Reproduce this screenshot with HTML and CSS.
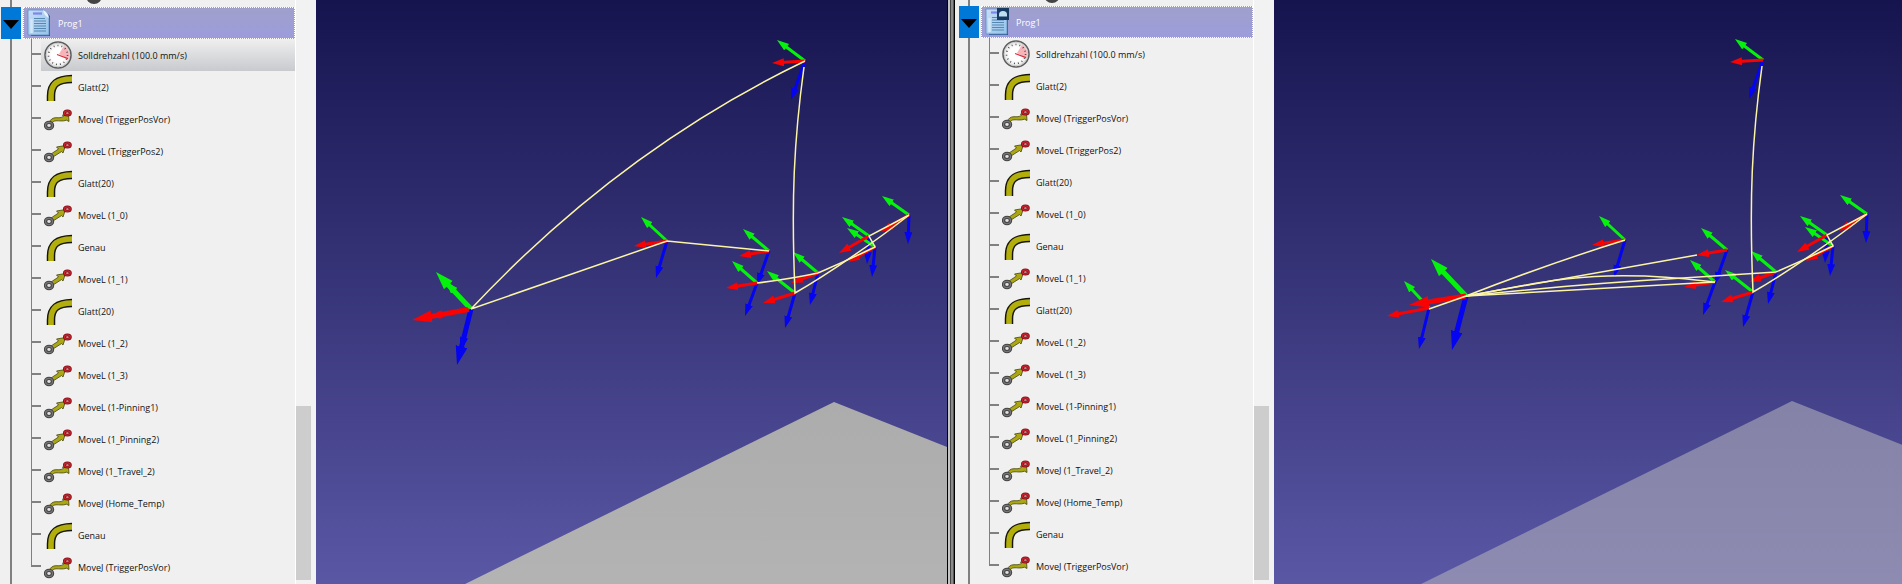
FILE: index.html
```
<!DOCTYPE html>
<html lang="de">
<head>
<meta charset="utf-8">
<title>Prog1</title>
<link rel="stylesheet" href="styles.css">
</head>
<body>
<svg class="defs" width="0" height="0" aria-hidden="true">
  <defs>
    <marker id="tip-r" markerUnits="userSpaceOnUse" markerWidth="14" markerHeight="10" refX="12" refY="4" orient="auto"><path d="M0 0 L12 4 L0 8Z" fill="#f80303"/></marker>
    <marker id="tip-g" markerUnits="userSpaceOnUse" markerWidth="14" markerHeight="10" refX="12" refY="4" orient="auto"><path d="M0 0 L12 4 L0 8Z" fill="#04f20c"/></marker>
    <marker id="tip-b" markerUnits="userSpaceOnUse" markerWidth="14" markerHeight="10" refX="12" refY="4" orient="auto"><path d="M0 0 L12 4 L0 8Z" fill="#0404f0"/></marker>
    <marker id="big-r" markerUnits="userSpaceOnUse" markerWidth="20" markerHeight="14" refX="20" refY="6" orient="auto"><path d="M0 0 L20 6 L0 12Z" fill="#f80303"/></marker>
    <marker id="big-g" markerUnits="userSpaceOnUse" markerWidth="20" markerHeight="14" refX="18" refY="6" orient="auto"><path d="M0 0 L18 6 L0 12Z" fill="#04f20c"/></marker>
    <marker id="big-b" markerUnits="userSpaceOnUse" markerWidth="20" markerHeight="14" refX="19" refY="6" orient="auto"><path d="M0 0 L19 6 L0 12Z" fill="#0404f0"/></marker>
    <linearGradient id="floor-solid" x1="0" y1="0" x2="0" y2="1"><stop offset="0" stop-color="#acacac"/><stop offset="1" stop-color="#b8b8b8"/></linearGradient>
    <linearGradient id="floor-clear" x1="0" y1="0" x2="0" y2="1"><stop offset="0" stop-color="#8482a6"/><stop offset="1" stop-color="#9391b8"/></linearGradient>
    <radialGradient id="dial"><stop offset="0.5" stop-color="#fff"/><stop offset="1" stop-color="#e4e4e4"/></radialGradient>
    <linearGradient id="paper" x1="0" y1="0" x2="1" y2="1"><stop offset="0" stop-color="#c9dcf8"/><stop offset="1" stop-color="#93c4e8"/></linearGradient>

    <g id="frames">
      <g class="axis axis-b">
        <path pathLength="100" d="M805 61 L791 100"/><path pathLength="100" d="M909 215 L908 244"/>
        <path pathLength="100" d="M869 236 L867 264"/><path pathLength="100" d="M875 247 L872 277"/>
        <path pathLength="100" d="M818 273 L810 305"/><path pathLength="100" d="M795 293 L785 328"/>
        <path pathLength="100" d="M769 251 L757 285"/><path pathLength="100" d="M757 283 L745 316"/>
        <path pathLength="100" d="M667 241 L656 278"/><path pathLength="100" d="M471 309 L461 350"/>
      </g>
      <g class="axis axis-g">
        <path pathLength="100" d="M805 61 L777 40"/><path pathLength="100" d="M909 215 L882 196"/>
        <path pathLength="100" d="M869 236 L842 217"/><path pathLength="100" d="M875 247 L847 228"/>
        <path pathLength="100" d="M818 273 L793 252"/><path pathLength="100" d="M795 293 L767 271"/>
        <path pathLength="100" d="M769 251 L743 229"/><path pathLength="100" d="M757 283 L732 261"/>
        <path pathLength="100" d="M667 241 L641 217"/><path pathLength="100" d="M471 309 L446 282"/>
      </g>
      <g class="axis axis-r">
        <path pathLength="100" d="M805 61 L772 63"/><path pathLength="100" d="M909 215 L881 232"/>
        <path pathLength="100" d="M869 236 L839 253"/><path pathLength="100" d="M875 247 L848 262"/>
        <path pathLength="100" d="M818 273 L791 283"/><path pathLength="100" d="M795 293 L763 303"/>
        <path pathLength="100" d="M769 251 L739 256"/><path pathLength="100" d="M757 283 L726 288"/>
        <path pathLength="100" d="M667 241 L634 246"/><path pathLength="100" d="M471 309 L429 317"/>
      </g>
    </g>
    <g id="shared-track" class="track">
      <path d="M804 67 C794 140 791 200 795 293 C830 273 880 238 909 215"/>
      <path d="M818 273 Q846 261 875 247 L869 236 L909 215"/>
    </g>

    <symbol id="i-speed" viewBox="0 0 28 28">
      <circle cx="14" cy="14" r="13" fill="url(#dial)" stroke="#5e5e5e" stroke-width="1.6"/>
      <circle cx="14" cy="14" r="11.8" fill="none" stroke="#c4c4c4" stroke-width="0.8"/>
      <path d="M15 13 L20 4.800 A11 11 0 0 1 24.500 18Z" fill="#f6b4b8"/>
      <circle cx="14" cy="14" r="9.500" fill="none" stroke="#444" stroke-width="1.600" stroke-dasharray="0.900 3.100"/>
      <path d="M13 13.500 L24 17.600" stroke="#d83040" stroke-width="1.200"/>
    </symbol>
    <symbol id="i-blend" viewBox="0 0 28 28">
      <path d="M7 28.500 V23 C7 11 13 6 28.500 6" fill="none" stroke="#16160a" stroke-width="8.500"/>
      <path d="M7 28.500 V23 C7 11 13 6 28.500 6" fill="none" stroke="#b2ae0c" stroke-width="5.600"/>
    </symbol>
    <symbol id="i-ends" viewBox="0 0 28 28">
      <ellipse cx="5" cy="20.500" rx="3.500" ry="3.100" fill="#e2e2e2" stroke="#444" stroke-width="3.400"/>
      <ellipse cx="5" cy="20.500" rx="3.500" ry="3.100" fill="none" stroke="#777" stroke-width="1.200"/>
      <ellipse cx="23.400" cy="8" rx="2.900" ry="2.100" fill="#fff" stroke="#7d0d14" stroke-width="3"/>
      <ellipse cx="23.400" cy="8" rx="2.900" ry="2.100" fill="none" stroke="#cc2530" stroke-width="1.200"/>
    </symbol>
    <symbol id="i-movej" viewBox="0 0 28 28">
      <path d="M5 18 C6 14.500 9 12.600 12 12.700 C15 12.800 17 13 19.500 11.400 L18.500 10 L24.500 9.500 L25 16.500 L22.500 15.200 C19 16.600 15 15.600 12 15.800 C10 16 8.500 16.800 8 18.500Z" fill="#aaa615" stroke="#45440d" stroke-width="0.800"/>
      <use href="#i-ends"/>
    </symbol>
    <symbol id="i-movel" viewBox="0 0 28 28">
      <path d="M7 17 L14.500 12 L12.500 10 L21.500 8.500 L19 16 L17.500 14.600 L9 20Z" fill="#aaa615" stroke="#45440d" stroke-width="0.800"/>
      <use href="#i-ends"/>
    </symbol>
    <symbol id="i-doc" viewBox="0 0 28 28">
      <path d="M5 2 H19 L24 7 V27 H5Z" fill="#32588a"/>
      <path d="M2 1 H17 Q22 3 23 9 V26 H2Z" fill="url(#paper)" stroke="#5b8ec4" stroke-width="0.800"/>
      <path d="M7 4.500 H16" stroke="#7b87ea" stroke-width="2.200"/>
      <path d="M17 1 Q18 7 23 9 Q22 3 17 1Z" fill="#e6f1fd"/>
      <path d="M5.500 10 V24" stroke="#d3e8f7" stroke-width="2.500"/>
      <path d="M8 9.500 H19 M8 12 H20 M8 14.500 H20 M8 17 H20 M8 19.500 H20 M8 22 H20" stroke="#5587b0" stroke-width="1"/>
    </symbol>
    <symbol id="i-doc-lock" viewBox="0 0 28 28">
      <use href="#i-doc"/>
      <rect x="13" y="0" width="12" height="12" fill="#173a63"/>
      <path d="M15 8.500 V6.500 Q15 3 19 3 Q23 3 23 6.500 V8.500Z" fill="#c0e0ef"/>
    </symbol>
  </defs>
</svg>

<main class="compare">
  <section class="pane">
    <div class="tree">
      <div class="previous"><span class="wheel"></span></div>
      <div class="program">
        <button class="toggle" aria-label="Prog1 einklappen"><svg viewBox="0 0 20 32"><path d="M2 13 H18 L10 22Z" fill="#000"/></svg></button>
        <div class="title"><svg class="icon"><use href="#i-doc"/></svg><span>Prog1</span></div>
      </div>
      <ul class="steps">
        <li><i class="branch"></i><div class="step selected"><svg class="icon"><use href="#i-speed"/></svg><span>Solldrehzahl (100.0 mm/s)</span></div></li>
        <li><i class="branch"></i><div class="step"><svg class="icon"><use href="#i-blend"/></svg><span>Glatt(2)</span></div></li>
        <li><i class="branch"></i><div class="step"><svg class="icon"><use href="#i-movej"/></svg><span>MoveJ (TriggerPosVor)</span></div></li>
        <li><i class="branch"></i><div class="step"><svg class="icon"><use href="#i-movel"/></svg><span>MoveL (TriggerPos2)</span></div></li>
        <li><i class="branch"></i><div class="step"><svg class="icon"><use href="#i-blend"/></svg><span>Glatt(20)</span></div></li>
        <li><i class="branch"></i><div class="step"><svg class="icon"><use href="#i-movel"/></svg><span>MoveL (1_0)</span></div></li>
        <li><i class="branch"></i><div class="step"><svg class="icon"><use href="#i-blend"/></svg><span>Genau</span></div></li>
        <li><i class="branch"></i><div class="step"><svg class="icon"><use href="#i-movel"/></svg><span>MoveL (1_1)</span></div></li>
        <li><i class="branch"></i><div class="step"><svg class="icon"><use href="#i-blend"/></svg><span>Glatt(20)</span></div></li>
        <li><i class="branch"></i><div class="step"><svg class="icon"><use href="#i-movel"/></svg><span>MoveL (1_2)</span></div></li>
        <li><i class="branch"></i><div class="step"><svg class="icon"><use href="#i-movel"/></svg><span>MoveL (1_3)</span></div></li>
        <li><i class="branch"></i><div class="step"><svg class="icon"><use href="#i-movel"/></svg><span>MoveL (1-Pinning1)</span></div></li>
        <li><i class="branch"></i><div class="step"><svg class="icon"><use href="#i-movel"/></svg><span>MoveL (1_Pinning2)</span></div></li>
        <li><i class="branch"></i><div class="step"><svg class="icon"><use href="#i-movej"/></svg><span>MoveJ (1_Travel_2)</span></div></li>
        <li><i class="branch"></i><div class="step"><svg class="icon"><use href="#i-movej"/></svg><span>MoveJ (Home_Temp)</span></div></li>
        <li><i class="branch"></i><div class="step"><svg class="icon"><use href="#i-blend"/></svg><span>Genau</span></div></li>
        <li><i class="branch"></i><div class="step"><svg class="icon"><use href="#i-movej"/></svg><span>MoveJ (TriggerPosVor)</span></div></li>
      </ul>
    </div>
    <div class="scrollbar"><div class="thumb"></div></div>
    <div class="scene">
      <svg viewBox="316 0 631 584" preserveAspectRatio="xMidYMid slice">
        <path d="M834 402 L1060 492 V700 H230Z" fill="url(#floor-solid)"/>
        <use href="#frames"/>
        <g class="axis axis-big">
          <path class="b" pathLength="100" d="M471 309 L457 365"/>
          <path class="g" pathLength="100" d="M471 309 L436 272"/>
          <path class="r" pathLength="100" d="M471 309 L412 320"/>
        </g>
        <g class="axis axis-r"><path pathLength="100" d="M471 309 L431 316"/></g>
        <g class="axis axis-g"><path pathLength="100" d="M471 309 L446 282"/></g>
        <g class="axis axis-b"><path pathLength="100" d="M471 309 L461 349"/></g>
        <use href="#shared-track"/>
        <g class="track">
          <path d="M805 61 Q620 150 471 309 L667 241 L769 251"/>
          <path d="M757 283 Q790 279 818 273"/>
        </g>
      </svg>
    </div>
  </section>

  <div class="divider"></div>

  <section class="pane second">
    <div class="tree">
      <div class="previous"><span class="wheel"></span></div>
      <div class="program">
        <button class="toggle" aria-label="Prog1 einklappen"><svg viewBox="0 0 20 32"><path d="M2 13 H18 L10 22Z" fill="#000"/></svg></button>
        <div class="title"><svg class="icon"><use href="#i-doc-lock"/></svg><span>Prog1</span></div>
      </div>
      <ul class="steps">
        <li><i class="branch"></i><div class="step"><svg class="icon"><use href="#i-speed"/></svg><span>Solldrehzahl (100.0 mm/s)</span></div></li>
        <li><i class="branch"></i><div class="step"><svg class="icon"><use href="#i-blend"/></svg><span>Glatt(2)</span></div></li>
        <li><i class="branch"></i><div class="step"><svg class="icon"><use href="#i-movej"/></svg><span>MoveJ (TriggerPosVor)</span></div></li>
        <li><i class="branch"></i><div class="step"><svg class="icon"><use href="#i-movel"/></svg><span>MoveL (TriggerPos2)</span></div></li>
        <li><i class="branch"></i><div class="step"><svg class="icon"><use href="#i-blend"/></svg><span>Glatt(20)</span></div></li>
        <li><i class="branch"></i><div class="step"><svg class="icon"><use href="#i-movel"/></svg><span>MoveL (1_0)</span></div></li>
        <li><i class="branch"></i><div class="step"><svg class="icon"><use href="#i-blend"/></svg><span>Genau</span></div></li>
        <li><i class="branch"></i><div class="step"><svg class="icon"><use href="#i-movel"/></svg><span>MoveL (1_1)</span></div></li>
        <li><i class="branch"></i><div class="step"><svg class="icon"><use href="#i-blend"/></svg><span>Glatt(20)</span></div></li>
        <li><i class="branch"></i><div class="step"><svg class="icon"><use href="#i-movel"/></svg><span>MoveL (1_2)</span></div></li>
        <li><i class="branch"></i><div class="step"><svg class="icon"><use href="#i-movel"/></svg><span>MoveL (1_3)</span></div></li>
        <li><i class="branch"></i><div class="step"><svg class="icon"><use href="#i-movel"/></svg><span>MoveL (1-Pinning1)</span></div></li>
        <li><i class="branch"></i><div class="step"><svg class="icon"><use href="#i-movel"/></svg><span>MoveL (1_Pinning2)</span></div></li>
        <li><i class="branch"></i><div class="step"><svg class="icon"><use href="#i-movej"/></svg><span>MoveJ (1_Travel_2)</span></div></li>
        <li><i class="branch"></i><div class="step"><svg class="icon"><use href="#i-movej"/></svg><span>MoveJ (Home_Temp)</span></div></li>
        <li><i class="branch"></i><div class="step"><svg class="icon"><use href="#i-blend"/></svg><span>Genau</span></div></li>
        <li><i class="branch"></i><div class="step"><svg class="icon"><use href="#i-movej"/></svg><span>MoveJ (TriggerPosVor)</span></div></li>
      </ul>
    </div>
    <div class="scrollbar"><div class="thumb"></div></div>
    <div class="scene">
      <svg viewBox="316 1 628 584" preserveAspectRatio="xMidYMid slice">
        <path d="M834 402 L1060 492 V700 H230Z" fill="url(#floor-clear)"/>
        <use href="#frames"/>
        <g class="axis axis-big">
          <path class="b" pathLength="100" d="M508 297 L494 351"/>
          <path class="g" pathLength="100" d="M508 297 L473 260"/>
          <path class="r" pathLength="100" d="M508 297 L451 306"/>
        </g>
        <use href="#shared-track"/>
        <g class="track">
          <path d="M471 310 L508 297 Q590 265 667 241"/>
          <path d="M508 297 L739 256"/>
          <path d="M508 297 C560 288 600 278 650 277 S730 280 757 283"/>
          <path d="M508 297 Q640 290 757 283"/>
          <path d="M508 297 Q620 285 725 279 L818 273"/>
        </g>
      </svg>
    </div>
  </section>
</main>
</body>
</html>
```
FILE: styles.css
```
* { box-sizing: border-box; }

body {
  margin: 0;
  background: #f0f0f0;
  color: #111;
  font: 9px/12px "Open Sans", "Noto Sans", sans-serif;
}

.defs { display: block; }

.compare {
  display: flex;
  height: 100vh;
  overflow: hidden;
}

.pane {
  display: flex;
  flex: 1;
  min-width: 0;
}

.tree {
  flex: none;
  width: 296px;
  padding-left: 1px;
  border-right: 1px solid #fff;
  background: linear-gradient(#808080, #808080) 10px 0 / 2px 100% no-repeat #f0f0f0;
}

.second .tree { margin-left: 3px; }

.previous {
  height: 7px;
  padding-left: 85px;
  overflow: hidden;
}

.second .previous { height: 6px; }

.wheel {
  display: block;
  width: 16px;
  height: 16px;
  margin-top: -12px;
  border: 4px solid #444;
  border-radius: 50%;
  background: #ccc;
}

.second .wheel { margin-top: -13px; }

.program {
  display: flex;
  gap: 2px;
  height: 32px;
}

.toggle {
  width: 20px;
  padding: 0;
  border: 0;
  background: #0078d7;
}

.toggle svg { display: block; width: 20px; height: 32px; }

.title {
  display: flex;
  flex: 1;
  align-items: center;
  gap: 4px;
  padding-left: 2px;
  border: 1px dotted #fff;
  background: linear-gradient(#a0a0cc, #9c9cdc);
  color: #fff;
}

.icon { flex: none; width: 28px; height: 28px; }

.steps {
  margin: 0;
  padding: 0 0 0 30px;
  list-style: none;
}

.steps li { display: flex; height: 32px; }

.branch {
  width: 10px;
  background:
    linear-gradient(#808080, #808080) 0 0 / 1px 100% no-repeat,
    linear-gradient(#808080, #808080) 0 14px / 10px 2px no-repeat;
}

.steps li:last-child .branch { height: 16px; }

.step {
  display: flex;
  flex: 1;
  align-items: center;
  gap: 6px;
  padding-left: 3px;
}

.step span,
.title span { padding-top: 1px; }

.selected { background: linear-gradient(#efefef, #c8cace); }

.scrollbar {
  display: flex;
  flex: none;
  flex-direction: column;
  justify-content: flex-end;
  width: 20px;
  padding: 0 5px 4px 0;
  background: #f2f2f2;
}

.thumb { height: 30%; background: #cdcdcd; }

.scene {
  flex: 1;
  min-width: 0;
  background: linear-gradient(#16144f, #5a57a5);
}

.scene svg { display: block; width: 100%; height: 100%; }

.divider {
  flex: none;
  width: 8px;
  border: solid #000;
  border-width: 0 1px;
  background: linear-gradient(90deg, #c4c4c4 2px, #444 2px 3px, #8a8a8a 3px 5px, #555 5px);
}

.track path { fill: none; stroke: #fcf5a4; stroke-width: 1.5px; }

.axis path { fill: none; stroke-width: 3px; stroke-dasharray: 75 100; }
.axis-r path { stroke: #f80303; marker-end: url(#tip-r); }
.axis-g path { stroke: #04f20c; marker-end: url(#tip-g); }
.axis-b path { stroke: #0404f0; marker-end: url(#tip-b); }

.axis-big path { stroke-width: 5px; }
.axis-big .r { stroke: #f80303; marker-end: url(#big-r); }
.axis-big .g { stroke: #04f20c; marker-end: url(#big-g); }
.axis-big .b { stroke: #0404f0; marker-end: url(#big-b); }
```
